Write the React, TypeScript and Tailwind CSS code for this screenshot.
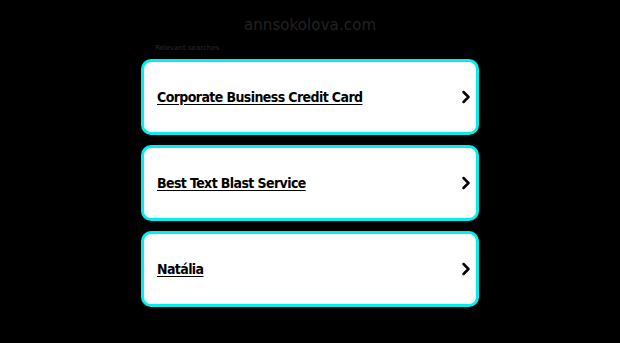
import { ChevronRight } from 'lucide-react';

const searches = [
  'Corporate Business Credit Card',
  'Best Text Blast Service',
  'Natália',
];

export default function App() {
  return (
    <div className="min-h-screen w-full bg-black flex flex-col items-center">
      {/* Domain header */}
      <h1 className="mt-[15px] text-[15px] leading-5 tracking-[0.1px] text-[#222222] font-['DejaVu_Sans',sans-serif]">
        annsokolova.com
      </h1>

      <div className="w-[338px] mt-[8px]">
        <p className="pl-[14px] text-[7px] leading-[10px] text-[#2a2a2a] font-['DejaVu_Sans',sans-serif]">
          Relevant searches
        </p>

        <div className="mt-[6px] flex flex-col gap-[10px]">
          {searches.map((item) => (
            <a
              key={item}
              href="#"
              className="h-[76px] flex items-center justify-between pl-[13px] pr-0 bg-white border-[3px] border-[#00f0f0] rounded-[10px]"
            >
              <span className="text-[14px] font-bold tracking-[-0.6px] underline underline-offset-2 text-black font-['DejaVu_Sans_Condensed','DejaVu_Sans',sans-serif]">
                {item}
              </span>
              <ChevronRight className="w-5 h-5 text-black" strokeWidth={3} />
            </a>
          ))}
        </div>
      </div>
    </div>
  );
}
